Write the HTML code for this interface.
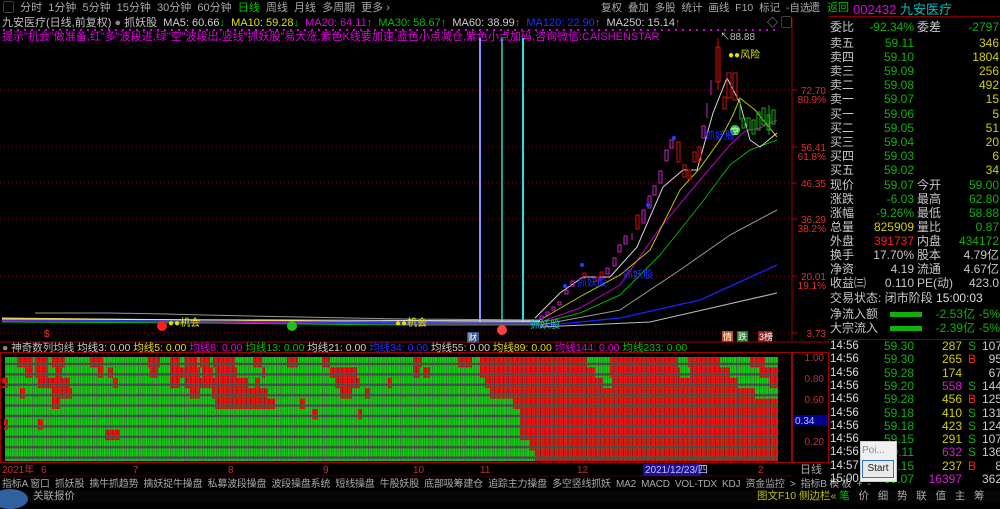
<!DOCTYPE html>
<html><head><meta charset="utf-8"><style>
*{margin:0;padding:0;box-sizing:border-box}
body{width:1000px;height:503px;background:#000;overflow:hidden;position:relative;font-family:"Liberation Sans","Noto Sans CJK SC",sans-serif;font-size:11px;color:#c0c0c0}
.a{position:absolute;white-space:nowrap;line-height:13px}
.r{text-align:right}
.g{color:#00c000}.y{color:#e0e000}.rd{color:#ff3030}.m{color:#e000e0}.w{color:#d0d0d0}.cy{color:#00c0c0}.b{color:#2030ff}
.rp .a{font-size:12px}
</style></head><body>
<div class="a" style="left:3px;top:2px;color:#aaa">▢ &nbsp;分时 &nbsp;1分钟 &nbsp;5分钟 &nbsp;15分钟 &nbsp;30分钟 &nbsp;60分钟 &nbsp;<span class="g">日线</span> &nbsp;周线 &nbsp;月线 &nbsp;多周期 &nbsp;更多 ›</div>
<div class="a" style="left:601px;top:2px;color:#aaa;font-size:10.5px">复权 &nbsp;叠加 &nbsp;多股 &nbsp;统计 &nbsp;画线 &nbsp;F10 &nbsp;标记 &nbsp;-自选</div>
<div class="a" style="left:809px;top:2px;color:#aaa">遗 <span class="g" style="margin-left:4px">返回</span></div>
<div class="a" style="left:853px;top:3px;font-size:13px"><span class="m">002432</span> <span class="cy">九安医疗</span></div>
<div class="a" style="left:2px;top:17px;color:#c0c0c0">九安医疗(日线,前复权) <span style="color:#888">●</span> 抓妖股 &nbsp;<span class="w">MA5: 60.66</span><span class="g">↓</span> &nbsp;<span class="y">MA10: 59.28</span><span class="g">↓</span> &nbsp;<span class="m">MA20: 64.11</span><span class="rd">↑</span> &nbsp;<span class="g">MA30: 58.67</span><span class="rd">↑</span> &nbsp;<span class="w">MA60: 38.99</span><span class="rd">↑</span> &nbsp;<span class="b">MA120: 22.90</span><span class="rd">↑</span> &nbsp;<span class="w">MA250: 15.14</span><span class="rd">↑</span></div>
<div class="a m" style="left:2px;top:31px">提示"机会"做准备,红"多"波段进,绿"空"波段出,竖线"抓妖股"易大涨,紫色K线要加速,蓝色小点减仓,紫色小点加码,咨询微信:CAISHENSTAR</div>
<div class="a" style="left:767px;top:17px;color:#aaa">◇ ▢</div>

<svg class="a" style="left:0;top:0" width="830" height="503">
<defs>
<pattern id="pg" width="4.6" height="10.4" patternUnits="userSpaceOnUse"><rect x="0" y="1.2" width="4.6" height="8" fill="#14d014"/><line x1="2.3" y1="1.2" x2="2.3" y2="9.2" stroke="#0a9a0a" stroke-width="0.8"/><line x1="0.3" y1="1" x2="0.3" y2="10" stroke="#4a4a4a" stroke-width="0.6"/></pattern>
<pattern id="pr" width="4.6" height="10.4" patternUnits="userSpaceOnUse"><rect x="0" y="1.2" width="4.6" height="8" fill="#f01010"/><line x1="2.3" y1="1.2" x2="2.3" y2="9.2" stroke="#b00000" stroke-width="0.8"/><line x1="0.3" y1="1" x2="0.3" y2="10" stroke="#4a4a4a" stroke-width="0.6"/></pattern>
</defs>
<line x1="792" y1="18" x2="792" y2="340" stroke="#a00000"/>
<g stroke="#900000" stroke-dasharray="1,3">
<line x1="0" y1="90" x2="792" y2="90"/><line x1="0" y1="147" x2="792" y2="147"/><line x1="0" y1="183" x2="792" y2="183"/><line x1="0" y1="219" x2="792" y2="219"/><line x1="0" y1="276" x2="792" y2="276"/><line x1="0" y1="333" x2="792" y2="333"/>
</g>
<g stroke="#c00000"><line x1="792" y1="90" x2="797" y2="90"/><line x1="792" y1="147" x2="797" y2="147"/><line x1="792" y1="183" x2="797" y2="183"/><line x1="792" y1="219" x2="797" y2="219"/><line x1="792" y1="276" x2="797" y2="276"/><line x1="792" y1="333" x2="797" y2="333"/></g>
<line x1="3" y1="30" x2="780" y2="30" stroke="#d000d0" stroke-width="2" stroke-dasharray="2,5"/>
<line x1="480" y1="38" x2="480" y2="322" stroke="#9090ff" stroke-width="2"/>
<line x1="502" y1="38" x2="502" y2="322" stroke="#20a0a0" stroke-width="2"/>
<line x1="523" y1="38" x2="523" y2="322" stroke="#20e0e0" stroke-width="2"/>
<path d="M35 313 L110 313 L165 314 L205 315 L250 316 L300 317 L350 318 L405 319 L540 320" stroke="#999" fill="none"/>
<path d="M2 318 L100 319 L200 320 L300 321 L400 322 L540 322" stroke="#e0e000" fill="none"/>
<path d="M2 320 L150 321 L300 322 L450 323 L540 323" stroke="#3030ff" fill="none" stroke-width="1.5"/>
<path d="M2 321 L200 322 L400 324 L540 324" stroke="#c000c0" fill="none"/>
<path d="M2 322 L200 323 L400 325 L540 325" stroke="#00c000" fill="none"/>
<path d="M2 319 L540 321" stroke="#e0e0e0" fill="none"/>
<path d="M540 327 L650 322 L777 293" stroke="#bbb" fill="none"/>
<path d="M540 326 L620 318 L700 300 L777 265" stroke="#2020ff" fill="none" stroke-width="1.3"/>
<path d="M540 325 L620 310 L680 270 L730 235 L777 210" stroke="#999" fill="none"/>
<path d="M540 323 L580 313 L620 295 L660 255 L700 205 L730 165 L750 150 L777 140" stroke="#00b000" fill="none"/>
<path d="M540 322 L580 308 L620 285 L660 228 L700 180 L730 145 L745 131 L760 128 L777 120" stroke="#c000c0" fill="none"/>
<path d="M540 320 L583 295 L620 275 L650 250 L680 190 L700 168 L720 140 L733 115 L740 98 L755 110 L777 137" stroke="#c0c000" fill="none"/>
<path d="M535 318 L560 293 L583 277 L610 277 L637 247 L663 187 L683 170 L697 170 L713 113 L727 78 L740 103 L750 140 L760 147 L777 133" stroke="#d8d8d8" fill="none"/>
<g fill="none" stroke-width="1">
<g stroke="#d020d0">
<rect x="540" y="316" width="3" height="3"/><rect x="546" y="312" width="3" height="3"/><rect x="552" y="307" width="3" height="3"/><rect x="558" y="302" width="3" height="3"/>
<rect x="571" y="281" width="3" height="5"/><rect x="565" y="290" width="3" height="4"/>
<rect x="606" y="268" width="3" height="6"/><rect x="613" y="258" width="3" height="8"/><rect x="618" y="245" width="3" height="7"/><rect x="624" y="236" width="3" height="8"/>
<rect x="642" y="210" width="3" height="13"/><rect x="648" y="196" width="3" height="12"/><rect x="653" y="186" width="3" height="9"/><rect x="659" y="171" width="3" height="12"/><rect x="665" y="150" width="3" height="11"/><rect x="670" y="140" width="3" height="8"/>
<rect x="702" y="126" width="3" height="12"/><line x1="707" y1="103" x2="707" y2="118"/><line x1="711" y1="80" x2="711" y2="95"/>
<line x1="632" y1="233" x2="632" y2="240"/>
</g>
<g stroke="#d01010">
<rect x="583" y="273" width="3" height="5"/><rect x="596" y="277" width="3" height="4"/><rect x="600" y="272" width="3" height="7"/>
<rect x="636" y="215" width="3" height="14"/><rect x="677" y="142" width="3" height="20"/><rect x="683" y="165" width="3" height="12"/><rect x="688" y="170" width="3" height="9"/>
<rect x="693" y="152" width="3" height="10"/><rect x="698" y="147" width="3" height="14"/>
<rect x="716" y="47" width="4" height="35"/><rect x="723" y="97" width="3" height="12"/><rect x="727" y="73" width="4" height="25"/><rect x="733" y="73" width="4" height="27"/>
<line x1="718" y1="38" x2="718" y2="90"/>
</g>
<g stroke="#10b010">
<rect x="742" y="118" width="3" height="10"/><rect x="747" y="118" width="3" height="12"/><rect x="752" y="120" width="3" height="14"/><rect x="757" y="112" width="3" height="18"/><rect x="762" y="108" width="3" height="17"/><rect x="767" y="115" width="3" height="15"/><rect x="772" y="110" width="3" height="14"/>
<line x1="740" y1="100" x2="740" y2="120"/><line x1="769" y1="105" x2="769" y2="135"/>
</g>
</g>
<circle cx="674" cy="138" r="2" fill="#2040ff"/><circle cx="648" cy="205" r="2" fill="#2040ff"/><circle cx="582" cy="265" r="2" fill="#2040ff"/><circle cx="565" cy="286" r="2" fill="#2040ff"/>
<circle cx="735" cy="130" r="5" fill="#30d030"/><text x="731" y="134" font-size="8" fill="#fff">空</text>
<circle cx="162" cy="326" r="5" fill="#ff2020"/><circle cx="292" cy="326" r="5" fill="#20c020"/><circle cx="502" cy="330" r="5" fill="#ff4040"/>
<text x="720" y="40" font-size="10" fill="#bbb">↖88.88</text>
<text x="728" y="58" font-size="10" fill="#e0e000">●●风险</text>
<text x="705" y="139" font-size="10" fill="#2030ff">抓妖股</text>
<text x="577" y="286" font-size="10" fill="#2030ff">抓妖股</text>
<text x="623" y="278" font-size="10" fill="#2030ff">抓妖股</text>
<text x="530" y="328" font-size="10" fill="#20c0c0">抓妖股</text>
<text x="168" y="326" font-size="10" fill="#e0e000">●●机会</text>
<text x="395" y="326" font-size="10" fill="#e0e000">●●机会</text>
<text x="44" y="337" font-size="10" fill="#ff3030">$</text>
<rect x="467" y="332" width="12" height="11" fill="#3a5a8a"/><text x="468" y="341" font-size="9" fill="#fff">财</text>
<rect x="722" y="331" width="11" height="11" fill="#c05020"/><text x="723" y="340" font-size="9" fill="#fff">情</text>
<rect x="737" y="331" width="11" height="11" fill="#208020"/><text x="738" y="340" font-size="9" fill="#fff">跌</text>
<rect x="758" y="331" width="14" height="11" fill="#902020"/><text x="759" y="340" font-size="9" fill="#fff">3榜</text>
<g font-size="10" fill="#e03030" text-anchor="end">
<text x="826" y="94">72.70</text><text x="826" y="103">80.9%</text>
<text x="826" y="151">56.41</text><text x="826" y="160">61.8%</text>
<text x="826" y="187">46.35</text>
<text x="826" y="223">36.29</text><text x="826" y="232">38.2%</text>
<text x="826" y="280">20.01</text><text x="826" y="289">19.1%</text>
<text x="826" y="337">3.73</text>
</g>
<line x1="0" y1="342" x2="830" y2="342" stroke="#a00000"/>
<rect x="0.5" y="352.5" width="791" height="110" fill="none" stroke="#a00000"/>
<rect x="792.5" y="352.5" width="36" height="110" fill="none" stroke="#a00000"/>
<rect x="5" y="357" width="773" height="104" fill="#4a4a4a"/>
<g id="grid"></g>
<g font-size="10" fill="#c03030" text-anchor="end">
<text x="824" y="361">1.00</text><text x="824" y="382">0.80</text><text x="824" y="403">0.60</text><text x="824" y="445">0.20</text>
</g>
<g stroke="#700000" stroke-dasharray="1,3"><line x1="778" y1="358" x2="792" y2="358"/><line x1="778" y1="379" x2="792" y2="379"/><line x1="778" y1="400" x2="792" y2="400"/><line x1="778" y1="421" x2="792" y2="421"/><line x1="778" y1="442" x2="792" y2="442"/></g>
<rect x="793" y="415" width="35" height="11" fill="#000090"/><text x="795" y="424" font-size="10" fill="#c0c0ff">0.34</text>
<line x1="0" y1="476" x2="792" y2="476" stroke="#400000"/>
<g font-size="10" fill="#c03030">
<text x="2" y="473">2021年</text><text x="41" y="473">6</text><text x="133" y="473">7</text><text x="228" y="473">8</text><text x="323" y="473">9</text><text x="413" y="473">10</text><text x="480" y="473">11</text><text x="577" y="473">12</text><text x="758" y="473">2</text>
</g>
<rect x="643" y="464" width="58" height="12" fill="#201090"/><text x="645" y="473" font-size="10" fill="#c0c0ff">2021/12/23/四</text>
<text x="800" y="473" font-size="11" fill="#aaa">日线</text>
</svg>
<div class="a" style="left:2px;top:342px;font-size:10.5px"><span style="color:#888">●</span> 神奇数列均线 <span class="w">均线3: 0.00</span> <span class="y">均线5: 0.00</span> <span class="m">均线8: 0.00</span> <span class="g">均线13: 0.00</span> <span class="w">均线21: 0.00</span> <span class="b">均线34: 0.00</span> <span class="w">均线55: 0.00</span> <span class="y">均线89: 0.00</span> <span class="m">均线144: 0.00</span> <span class="g">均线233: 0.00</span></div>
<div class="a" style="left:2px;top:478px;color:#aaa;font-size:10px;letter-spacing:-0.2px">指标A 窗口 &nbsp;抓妖股 &nbsp;擒牛抓趋势 &nbsp;擒妖捉牛操盘 &nbsp;私募波段操盘 &nbsp;波段操盘系统 &nbsp;短线操盘 &nbsp;牛股妖股 &nbsp;底部吸筹建仓 &nbsp;追踪主力操盘 &nbsp;多空竖线抓妖 &nbsp;MA2 &nbsp;MACD &nbsp;VOL-TDX &nbsp;KDJ &nbsp;资金监控 &nbsp;&gt; &nbsp;指标B 模 板 &nbsp;+ &nbsp;-</div>
<div class="a" style="left:0;top:491px;width:1000px;height:12px;background:#050505"></div>
<div class="a" style="left:-8px;top:489px;width:36px;height:20px;border-radius:50%;background:#3060a0"></div>
<div class="a" style="left:33px;top:490px;color:#aaa;font-size:10.5px">关联报价</div>
<div class="a" style="left:757px;top:490px;color:#c0c000;font-size:10.5px">图文F10 侧边栏« <span class="g">笔</span> &nbsp;&nbsp;<span style="color:#aaa">价 &nbsp;&nbsp;细 &nbsp;&nbsp;势 &nbsp;&nbsp;联 &nbsp;&nbsp;值 &nbsp;&nbsp;主 &nbsp;&nbsp;筹</span></div>

<div class="rp">
<div class="a" style="left:828px;top:16px;width:172px;height:1px;background:#800000"></div>
<div id="rows"></div>
</div>
<div class="a" style="left:860px;top:441px;width:37px;height:41px;background:#f0f0f0;border:1px solid #ccc"></div>
<div class="a" style="left:862px;top:444px;font-size:10px;color:#888">Poi...</div>
<div class="a" style="left:862px;top:460px;width:32px;height:18px;border:1px solid #3070d0;background:#e8e8e8;font-size:10px;color:#222;text-align:center;line-height:16px">Start</div>
<script>
var R=[
[[17,33],[35,48],[52,65],[90,103],[148,160],[170,180],[185,197],[200,210],[213,235],[253,262],[287,298],[322,330],[413,422],[458,472],[480,587],[610,678],[688,720],[750,765]],
[[25,33],[35,48],[55,62],[98,103],[108,113],[150,158],[170,200],[202,213],[215,237],[262,265],[330,357],[413,420],[423,430],[480,595],[610,680],[690,730],[760,778]],
[[2,8],[38,70],[113,118],[170,180],[185,248],[255,260],[335,360],[388,392],[485,603],[612,738],[770,778]],
[[20,25],[52,72],[190,200],[212,268],[340,352],[365,370],[490,755]],
[[52,60],[215,275],[300,305],[513,778]],
[[312,318],[358,362],[520,778]],
[[4,8],[38,43],[520,778]],
[[105,120],[520,778]],
[[530,778]],[[535,778]]];
var s='';
for(var i=0;i<10;i++){var y=357+i*10.4;s+='<rect x="5" y="'+y+'" width="773" height="10.4" fill="url(#pg)"/>';
R[i].forEach(function(a){s+='<rect x="'+a[0]+'" y="'+y+'" width="'+(a[1]-a[0])+'" height="10.4" fill="url(#pr)"/>';});}
document.getElementById('grid').innerHTML=s;
var G='#10b010',Y='#d0d000',W='#c8c8c8',RD='#ff2020',M='#d020d0';
function t(x,y,txt,c,al,w){return '<div class="a'+(al?' r':'')+'" style="left:'+x+'px;top:'+y+'px;'+(w?'width:'+w+'px;':'')+'color:'+c+'">'+txt+'</div>';}
var h='';
h+=t(830,21,'委比',W)+t(850,21,'-92.34%',G,1,64)+t(917,21,'委差',W)+t(940,21,'-2797',G,1,59);
var ob=[['卖五','59.11','346'],['卖四','59.10','1804'],['卖三','59.09','256'],['卖二','59.08','492'],['卖一','59.07','15'],['买一','59.06','5'],['买二','59.05','51'],['买三','59.04','20'],['买四','59.03','6'],['买五','59.02','34']];
var ys=[37,51,65,79,93,108,122,136,150,164];
ob.forEach(function(o,i){h+=t(830,ys[i],o[0],W)+t(850,ys[i],o[1],G,1,64)+t(940,ys[i],o[2],Y,1,59);});
var st=[['现价','59.07',G,'今开','59.00',G],['涨跌','-6.03',G,'最高','62.80',G],['涨幅','-9.26%',G,'最低','58.88',G],['总量','825909',Y,'量比','0.87',G],['外盘','391737',RD,'内盘','434172',G],['换手','17.70%',W,'股本','4.79亿',W],['净资','4.19',W,'流通','4.67亿',W],['收益㈢','0.110',W,'PE(动)','423.0',W]];
st.forEach(function(o,i){var y=179+i*14;h+=t(830,y,o[0],W)+t(850,y,o[1],o[2],1,64)+t(917,y,o[3],W)+t(940,y,o[4],o[5],1,59);});
h+=t(830,292,'交易状态: 闭市阶段 <span style="color:#ddd">15:00:03</span>',W);
h+=t(830,308,'净流入额',W)+'<div class="a" style="left:890px;top:312px;width:32px;height:5px;background:#10b010"></div>'+t(920,308,'-2.53亿',G,1,55)+t(975,308,'-5%',G,1,25);
h+=t(830,322,'大宗流入',W)+'<div class="a" style="left:890px;top:326px;width:32px;height:5px;background:#10b010"></div>'+t(920,322,'-2.39亿',G,1,55)+t(975,322,'-5%',G,1,25);
h+='<div class="a" style="left:828px;top:339px;width:172px;height:1px;background:#800000"></div>';
var tr=[['14:56','59.30','287',Y,'S','107'],['14:56','59.30','265',Y,'B','95'],['14:56','59.28','174',Y,'','67'],['14:56','59.20','558',M,'S','144'],['14:56','59.28','456',Y,'B','125'],['14:56','59.18','410',Y,'S','131'],['14:56','59.18','423',Y,'S','124'],['14:56','59.15','291',Y,'S','107'],['14:56','59.11','632',M,'S','136'],['14:57','59.15','237',Y,'B','8'],['15:00','59.07','16397',M,'','362']];
tr.forEach(function(o,i){var y=340+i*13.3;h+='<div class="a" style="left:830px;top:'+y+'px;color:#ddd;font-size:11.5px">'+o[0]+'</div>'+t(860,y,o[1],G,1,54)+t(915,y,o[2],o[3],1,47)+t(968,y,o[4],o[4]=='B'?RD:G)+t(975,y,o[5],'#ccc',1,27);});
document.getElementById('rows').innerHTML=h;
</script>
</body></html>
